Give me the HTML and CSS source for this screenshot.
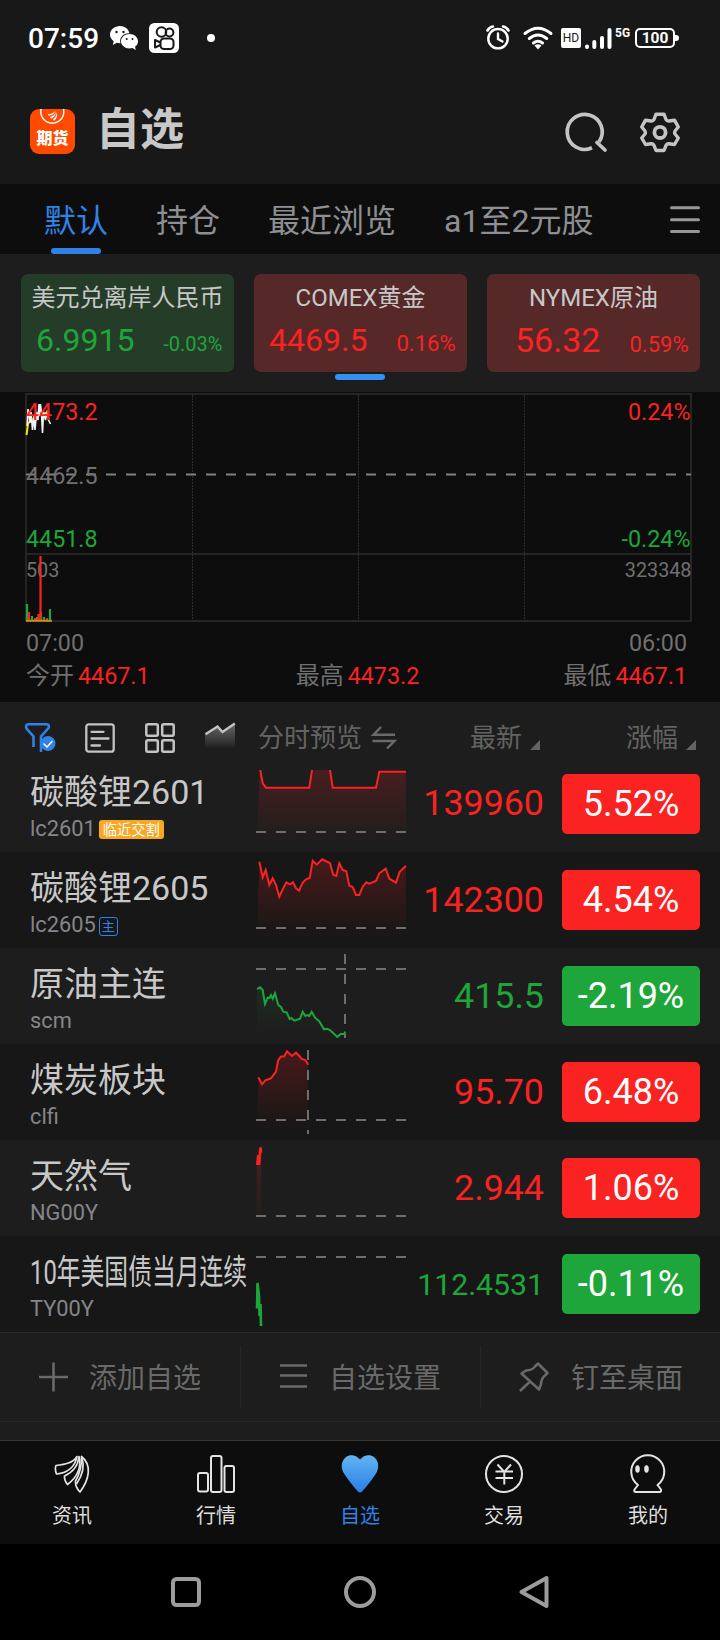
FILE: index.html
```html
<!DOCTYPE html>
<html lang="zh-CN">
  <head>
    <meta charset="UTF-8" />
    <meta name="viewport" content="width=device-width, initial-scale=1.0" />
    <title>自选</title>
    <link rel="stylesheet" href="styles.css">
  </head>
  <body>
    <!-- Status bar -->
    <div class="status-bar">
      <span class="time">07:59</span>
      <svg class="ic-wechat" width="28" height="24" viewBox="0 0 28 24">
        <path fill="#fff" d="M10 0C4.500 0 0 3.800 0 8.600c0 2.700 1.400 5 3.700 6.600L2.800 19l4-2.200c1.200.3 2.300.5 3.700.4C9 11.500 13 7 19.500 7.200 18.500 3 14.600 0 10 0z" />
        <path fill="#fff" d="M19.500 8c-4.700 0-8.500 3.200-8.500 7.200s3.800 7.200 8.500 7.200c1 0 2-.1 2.900-.4l3.400 2-.8-3.200c1.800-1.300 3-3.300 3-5.600 0-4-3.800-7.200-8.500-7.200z" />
        <g fill="#181818"><circle cx="6.500" cy="6" r="1.200" /><circle cx="13.500" cy="6" r="1.200" /><circle cx="16.700" cy="13" r="1" /><circle cx="22.500" cy="13" r="1" /></g>
      </svg>
      <svg class="ic-kuai" width="30" height="30" viewBox="0 0 30 30">
        <rect width="30" height="30" rx="5.500" fill="#fff" />
        <g fill="none" stroke="#181818" stroke-width="2">
          <circle cx="12.500" cy="9" r="4.800" />
          <circle cx="20.500" cy="9.500" r="3.900" />
          <rect x="11.500" y="15.500" width="13" height="10.500" rx="3.500" />
          <path d="M11.500 19.500L6 17v7.500l5.500-2.500" stroke-linejoin="round" />
        </g>
      </svg>
      <i class="dot"></i>
      <svg class="ic-alarm" width="24" height="25" viewBox="0 0 24 25">
        <g fill="none" stroke="#fff" stroke-width="2.400" stroke-linecap="round">
          <circle cx="12" cy="13.700" r="9.700" />
          <path d="M12 8.500v5.500l4.500 2.500" />
          <path d="M1.500 5.500Q3.500 2 7 1.500M22.500 5.500Q20.500 2 17 1.500" stroke-width="2.600" />
        </g>
      </svg>
      <svg class="ic-wifi" width="30" height="24" viewBox="0 0 30 24">
        <g fill="none" stroke="#fff" stroke-width="3" stroke-linecap="round">
          <path d="M2 7.500Q15-3 28 7.500" />
          <path d="M6.300 12.500Q15 5.500 23.700 12.500" />
          <path d="M10.500 17Q15 13.500 19.500 17" />
        </g>
        <path fill="#fff" d="M11.500 19.500Q15 17 18.500 19.500L15 23.500z" />
      </svg>
      <span class="hd">HD</span>
      <svg class="ic-signal" width="27" height="21" viewBox="0 0 27 21">
        <g stroke="#fff" stroke-width="4" stroke-linecap="round">
          <path d="M2 18.500v.5M9.300 14v5M17 10v9M24.500 2v17" />
        </g>
      </svg>
      <span class="net">5G</span>
      <span class="battery">100</span>
    </div>

    <!-- Title bar -->
    <header class="header">
      <div class="logo">
        <svg width="45" height="18" viewBox="0 0 45 18">
          <circle cx="22.300" cy="2.700" r="11.500" fill="none" stroke="#fff" stroke-width="1.500" />
          <path fill="#fff" d="M25.500 2c-2 2-4 3.200-7.500 3.200l.5 1.600C22 6.500 24 5 25.500 2zM26 2.500c-1 3-3 4.500-6 5.500l1 1.800c3-1.300 5-4 5-7.300zM26.500 3c.5 3-1 5.500-3.500 7.300l1 1.500c3-2.300 4-5.800 2.500-8.800z" />
        </svg>
        <span>期货</span>
      </div>
      <h1>自选</h1>
      <svg class="ic-search" width="42" height="42" viewBox="0 0 42 42">
        <g fill="none" stroke="#c4c4c4" stroke-width="3.700" stroke-linecap="round">
          <path d="M26 36.800A17.500 17.500 0 1 1 33 31" stroke-linecap="butt" />
          <path d="M31 31.500l8 7.500" />
        </g>
      </svg>
      <svg class="ic-gear" width="42" height="42" viewBox="0 0 42 42">
        <g fill="none" stroke="#c4c4c4" stroke-width="3.400" stroke-linejoin="round">
          <path d="M17 3.200H25L27 8.500Q28 10.300 30 10L35.500 9.200L39.300 16L36 20Q35.200 21.500 36 23L39.300 27L35.500 33.500L30 32.700Q28 32.500 27 34.300L25 39.500H17L15 34.300Q14 32.500 12 32.700L6.500 33.500L2.700 27L6 23Q6.800 21.500 6 20L2.700 16L6.500 9.200L12 10Q14 10.300 15 8.500Z" />
          <circle cx="21" cy="21.400" r="5.600" stroke-width="3.800" />
        </g>
      </svg>
    </header>

    <!-- Group tabs -->
    <nav class="tabs">
      <a class="tab active">默认</a>
      <a class="tab">持仓</a>
      <a class="tab">最近浏览</a>
      <a class="tab">a1至2元股</a>
      <svg class="ic-menu" width="30" height="28" viewBox="0 0 30 28">
        <path d="M1.500 1.800h27M1.500 13.800h27M1.500 25.500h27" stroke="#98989c" stroke-width="3" stroke-linecap="round" />
      </svg>
    </nav>

    <!-- Index cards -->
    <section class="cards">
      <div class="card down">
        <div class="card-name">美元兑离岸人民币</div>
        <div class="card-row"><b>6.9915</b><span class="small">-0.03%</span></div>
      </div>
      <div class="card up">
        <div class="card-name">COMEX黄金</div>
        <div class="card-row"><b>4469.5</b><span>0.16%</span></div>
      </div>
      <div class="card up">
        <div class="card-name">NYMEX原油</div>
        <div class="card-row short"><b>56.32</b><span>0.59%</span></div>
      </div>
      <i class="pager"></i>
    </section>

    <!-- Intraday chart -->
    <section class="chart">
      <svg width="720" height="264" viewBox="0 0 720 264">
        <g fill="none" stroke="#252525" stroke-width="2">
          <rect x="26" y="2" width="665" height="227" />
          <path d="M26 162h665" />
          <path d="M192.500 3v226M358.500 3v226M524.500 3v226" stroke="#2e2e2e" stroke-width="1" stroke-dasharray="2 1" />
        </g>
        <path d="M26 82.500h665" stroke="#808080" stroke-width="2" stroke-dasharray="10 10" />
        <path d="M26.500 43L28 32l3-5 5 1 3-5 4-1 6-2" fill="none" stroke="#f5e400" stroke-width="2" />
        <path d="M27 34l1-17 2 14 1-11 1.500 18 1.500-14 1 14 1.500-18 1.500 8 1-16v12l1.500-12 1 10 1 19 1-21 2 8 2-10 1 10 2 4" fill="none" stroke="#f2f2f2" stroke-width="1.600" stroke-linejoin="bevel" />
        <g class="chart-text">
          <text x="26" y="28" class="t-up">4473.2</text>
          <text x="26" y="92">4462.5</text>
          <text x="26" y="155" class="t-down">4451.8</text>
          <text x="26" y="259">07:00</text>
          <text x="690.500" y="28" class="t-up end">0.24%</text>
          <text x="690.500" y="155" class="t-down end">-0.24%</text>
          <text x="687" y="259" class="end">06:00</text>
          <text x="26" y="185" class="vol">503</text>
          <text x="691.500" y="185" class="vol end">323348</text>
        </g>
        <path d="M27 229v-17M32 229v-5M37 229v-4M41 229v-9M44 229v-4M50 229v-12" stroke="#1fa63a" stroke-width="2.200" />
        <path d="M29 229v-9M35 229v-3M38.500 229v-7M40.500 229v-65M47 229v-3" stroke="#fb2222" stroke-width="2.200" />
        <path d="M26 228.800h26" stroke="#c89020" stroke-width="2" />
      </svg>
      <div class="stats">
        <span>今开<em>4467.1</em></span>
        <span>最高<em>4473.2</em></span>
        <span>最低<em>4467.1</em></span>
      </div>
    </section>

    <!-- List toolbar -->
    <div class="toolbar">
      <svg class="ic-filter" width="32" height="32" viewBox="0 0 32 32">
        <path d="M8.500 25V14.500L1.500 6.500Q0 2.500 3.500 2.200H21.500Q25 2.500 23.500 6L16 14.500V30" fill="none" stroke="#3182e6" stroke-width="2.600" />
        <circle cx="23" cy="21.500" r="7.500" fill="#3182e6" />
        <path d="M18.500 21.500l3.500 3.500 5.500-6" fill="none" stroke="#fff" stroke-width="1.400" />
      </svg>
      <svg class="ic-list" width="30" height="30" viewBox="0 0 30 30">
        <g fill="none" stroke="#c4c4c4" stroke-width="2.300" stroke-linecap="round">
          <rect x="1.300" y="1.300" width="27.400" height="27.400" rx="2.500" />
          <path d="M6.500 8.800h12M6.500 15.500h17M6.500 22.500h8.500" />
        </g>
      </svg>
      <svg class="ic-grid" width="30" height="30" viewBox="0 0 30 30">
        <g fill="none" stroke="#c4c4c4" stroke-width="2.500">
          <rect x="1.300" y="1.300" width="11.500" height="11.500" rx="1.500" />
          <rect x="17.200" y="1.300" width="11.500" height="11.500" rx="1.500" />
          <rect x="1.300" y="17.200" width="11.500" height="11.500" rx="1.500" />
          <rect x="17.200" y="17.200" width="11.500" height="11.500" rx="1.500" />
        </g>
      </svg>
      <svg class="ic-trend" width="30" height="30" viewBox="0 0 30 30">
        <defs>
          <linearGradient id="trendFill" x1="0" y1="0" x2="0" y2="1">
            <stop offset="0" stop-color="#888" stop-opacity=".7" />
            <stop offset="1" stop-color="#888" stop-opacity="0" />
          </linearGradient>
        </defs>
        <path d="M0 11.500L12.500 3.500 17.500 9 30 1V26H0z" fill="url(#trendFill)" />
        <path d="M.5 11.200L12.500 3.500 17.500 9 29.800.5" fill="none" stroke="#c4c4c4" stroke-width="2.400" />
      </svg>
      <span class="col-preview">分时预览</span>
      <svg class="ic-swap" width="24" height="24" viewBox="0 0 24 24">
        <path d="M9 1L1.500 8.800H23M.5 15H22.500L15 22.500" fill="none" stroke="#6a6a6a" stroke-width="2.400" />
      </svg>
      <span class="col-last">最新<i class="sort"></i></span>
      <span class="col-change">涨幅<i class="sort"></i></span>
    </div>

    <!-- Quotes -->
    <svg class="defs" width="0" height="0">
      <defs>
        <linearGradient id="upFill" gradientUnits="userSpaceOnUse" x1="0" y1="0" x2="0" y2="80">
          <stop offset="0" stop-color="#fb2222" stop-opacity=".22" />
          <stop offset="1" stop-color="#fb2222" stop-opacity="0" />
        </linearGradient>
        <linearGradient id="downFill" gradientUnits="userSpaceOnUse" x1="0" y1="20" x2="0" y2="80">
          <stop offset="0" stop-color="#1fa63a" stop-opacity=".16" />
          <stop offset="1" stop-color="#1fa63a" stop-opacity="0" />
        </linearGradient>
      </defs>
    </svg>
    <main class="quotes">
      <div class="quote first">
        <div class="name"><h3>碳酸锂2601</h3><p>lc2601<span class="tag-warn">临近交割</span></p></div>
        <svg class="spark" width="150" height="84" viewBox="0 0 150 84">
          <path class="fill-up" d="M3.700 4L4.300 8 6.700 21.300 10 25.700H53.300L56 8V4H74V8L76.700 25.700H120L123.300 9.700H150V80H1z" />
          <path class="line-up" d="M3.700 4L4.300 8 6.700 21.300 10 25.700H53.300L56 8 56.500 4H73.500L74 8 76.700 25.700H120L123.300 9.700H150" />
          <path class="dash" d="M0 70h150" />
        </svg>
        <span class="price red">139960</span>
        <span class="pill bg-red">5.52%</span>
      </div>
      <div class="quote dark">
        <div class="name"><h3>碳酸锂2605</h3><p>lc2605<span class="tag-main">主</span></p></div>
        <svg class="spark" width="150" height="84" viewBox="0 0 150 84">
          <path class="fill-up" d="M3.300 3.700L6.700 19.300 9.700 12 13.300 27 16.700 20.300 20 27 23.300 38.700 27.300 30.300 30.300 24.300 34 26.300 37 24.300 40 30.300 43 32.700 46.700 24.700 50 21.300 53.700 20 56.700 2.700 60.700 6.700 66.300 1.300 74 5.300 77.300 17 80.300 18 83.300 5.300 86.700 12 90.300 13.300 93.300 27.700 96.700 29 100 37 103.300 37 106.700 28.700 110.300 24.300 113.300 25.700 120 23 123.300 15.300 129.700 10.700 133.300 20.700 140 24.700 143.700 13.700 150 7.700V80H1z" />
          <path class="line-up" d="M3.300 3.700L6.700 19.300 9.700 12 13.300 27 16.700 20.300 20 27 23.300 38.700 27.300 30.300 30.300 24.300 34 26.300 37 24.300 40 30.300 43 32.700 46.700 24.700 50 21.300 53.700 20 56.700 2.700 60.700 6.700 66.300 1.300 74 5.300 77.300 17 80.300 18 83.300 5.300 86.700 12 90.300 13.300 93.300 27.700 96.700 29 100 37 103.300 37 106.700 28.700 110.300 24.300 113.300 25.700 120 23 123.300 15.300 129.700 10.700 133.300 20.700 140 24.700 143.700 13.700 150 7.700" />
          <path class="dash" d="M0 70h150" />
        </svg>
        <span class="price red">142300</span>
        <span class="pill bg-red">4.54%</span>
      </div>
      <div class="quote">
        <div class="name"><h3>原油主连</h3><p>scm</p></div>
        <svg class="spark" width="150" height="84" viewBox="0 0 150 84">
          <path class="fill-down" d="M1 35L4 33.300 6.700 36 9 50 11.700 43.700 15 41 16.700 44.700 19 39.300 22.300 51 25 53 27.300 57.700 30.700 58.300 33.700 65 38.300 66.700 44 64.700 46.700 57.700 49.300 62 53.300 62 55.700 57.700 59 63.700 63.300 67.300 68 75.300 74 76 81.300 83H1z" />
          <path class="dash" d="M0 15h150M89 0v84" />
          <path class="line-down" d="M1 35L4 33.300 6.700 36 9 50 11.700 43.700 13.500 44 15 41 16.700 44.700 19 39.300 22.300 51 25 53 27.300 57.700 30.700 58.300 33.700 65 35.500 64 38.300 66.700 44 64.700 46.700 57.700 49.300 62 51 61 53.300 62 55.700 57.700 59 63.700 63.300 67.300 68 75.300 71 74.700 74 76 81.300 83 84.700 80 88.300 80 89.300 77.700" />
        </svg>
        <span class="price green">415.5</span>
        <span class="pill bg-green">-2.19%</span>
      </div>
      <div class="quote dark">
        <div class="name"><h3>煤炭板块</h3><p>clfi</p></div>
        <svg class="spark" width="150" height="84" viewBox="0 0 150 84">
          <path class="fill-up" d="M2.300 27.300L6 34.300 9.300 30.300 15 28.300 20 21.700 22 10.700 24.700 6.700 28.300 6.300 31 1.300 36 6 40 2.700 44 6.700 45.700 9 49.300 10 52 14.700V80H1z" />
          <path class="dash" d="M0 70h150M52 0v84" />
          <path class="line-up" d="M2.300 27.300L6 34.300 9.300 30.300 15 28.300 20 21.700 22 10.700 24.700 6.700 28.300 6.300 31 1.300 36 6 40 2.700 44 6.700 45.700 9 49.300 10 52.300 14.700" />
        </svg>
        <span class="price red">95.70</span>
        <span class="pill bg-red">6.48%</span>
      </div>
      <div class="quote">
        <div class="name"><h3>天然气</h3><p>NG00Y</p></div>
        <svg class="spark" width="150" height="84" viewBox="0 0 150 84">
          <path class="fill-up" d="M.7 19L4.300 1.300 5.300 6V80H.5z" />
          <path class="line-up thick" d="M1.300 19L2.200 9 3 19 4.500 1.300 5 6.500" />
          <path class="dash" d="M0 70h150" />
        </svg>
        <span class="price red">2.944</span>
        <span class="pill bg-red">1.06%</span>
      </div>
      <div class="quote dark">
        <div class="name"><h3 class="narrow">10年美国债当月连续</h3><p>TY00Y</p></div>
        <svg class="spark" width="150" height="84" viewBox="0 0 150 84">
          <path class="dash" d="M0 15h150" />
          <path class="line-down thick" d="M1 66.500L1.500 41 3 54 3.500 74 4.500 62 5 84" />
        </svg>
        <span class="price green long">112.4531</span>
        <span class="pill bg-green">-0.11%</span>
      </div>
    </main>

    <div class="actions">
      <a>
        <svg width="30" height="30" viewBox="0 0 30 30"><path d="M15.500.5v29M1 15h29" stroke="#6a6a6a" stroke-width="2.600" /></svg>
        <span>添加自选</span>
      </a>
      <a>
        <svg width="30" height="30" viewBox="0 0 30 30"><path d="M2 3.500h27M2 13.500h27M2 24.500h27" stroke="#6a6a6a" stroke-width="2.600" /></svg>
        <span>自选设置</span>
      </a>
      <a>
        <svg width="30" height="30" viewBox="-1 0 30 30"><path d="M19 1.500L28.500 11 26 13.500Q22.500 16 22 22L20 27.500 2.500 11.500 7 8.500Q14 8 16 4.500zM11.500 19L1 29" fill="none" stroke="#6a6a6a" stroke-width="2.500" stroke-linejoin="round" /></svg>
        <span>钉至桌面</span>
      </a>
    </div>

    <!-- Bottom navigation -->
    <nav class="bottom-nav">
      <a>
        <svg width="38" height="38" viewBox="0 0 38 38">
          <g fill="none" stroke="#e4e4e4" stroke-width="1.700" stroke-linejoin="round">
            <path d="M24 1.500C20 8 12 9.500 3 10.500Q1.500 14 3.500 19C14 18 22 12 24 1.500z" />
            <path d="M26 1.500C25 12 18 18 11.500 21Q11 25 14.500 29.500C23 23 29 14 26 1.500z" />
            <path d="M28.500 1.500C29 13 26 20 22.500 26Q22 32 27 37C36 25 39.500 10 28.500 1.500z" />
            <path d="M29 3Q33 15 23.500 29" />
          </g>
        </svg>
        <span>资讯</span>
      </a>
      <a>
        <svg width="38" height="38" viewBox="0 0 38 38">
          <g fill="none" stroke="#e4e4e4" stroke-width="2">
            <rect x="1" y="18" width="10" height="18.500" rx="2" />
            <rect x="14" y="1" width="10.500" height="36" rx="2" />
            <rect x="27.500" y="11" width="9.500" height="26" rx="2" />
          </g>
        </svg>
        <span>行情</span>
      </a>
      <a class="active">
        <svg width="38" height="38" viewBox="0 0 38 38">
          <defs>
            <linearGradient id="heart" x1="0" y1="0" x2="0" y2="1">
              <stop offset="0" stop-color="#62b5f3" />
              <stop offset="1" stop-color="#2b7de6" />
            </linearGradient>
          </defs>
          <path fill="url(#heart)" d="M19 4.500C23-.5 29-1 33 2c5 4 5.500 11 2 16.500C31.500 24 26 31 21.500 36q-2.500 3-5 0C12 31 6.500 24 3 18.500-.5 13 0 6 5 2 9-1 15-.5 19 4.500z" />
        </svg>
        <span>自选</span>
      </a>
      <a>
        <svg width="38" height="38" viewBox="0 0 38 38">
          <g fill="none" stroke="#e4e4e4" stroke-width="2">
            <circle cx="19" cy="19" r="18" />
            <path d="M12.500 9.500L19.300 17 26 9.500M10.500 16.500h17.500M10.500 23h17.500M19.300 17v12.500" />
          </g>
        </svg>
        <span>交易</span>
      </a>
      <a>
        <svg width="38" height="38" viewBox="0 0 38 38">
          <path d="M9 30A16.500 16.500 0 1 1 28.500 30L32 34.500Q32.500 37 30.500 37H7Q4.500 37 5.500 34.500z" fill="none" stroke="#e4e4e4" stroke-width="2" stroke-linejoin="round" />
          <ellipse cx="8.500" cy="14" rx="2.300" ry="3.700" fill="#e4e4e4" />
          <ellipse cx="17.500" cy="14" rx="2.300" ry="3.700" fill="#e4e4e4" />
        </svg>
        <span>我的</span>
      </a>
    </nav>

    <div class="system-nav">
      <svg width="32" height="34" viewBox="0 0 32 34"><rect x="3" y="4" width="26" height="26" rx="3.500" /></svg>
      <svg width="32" height="34" viewBox="0 0 32 34"><circle cx="16" cy="17" r="14" /></svg>
      <svg width="32" height="34" viewBox="0 0 32 34"><path d="M28.500 3V31L3.500 17z" stroke-linejoin="round" /></svg>
    </div>
  </body>
</html>
```
FILE: styles.css
```css
* {
  box-sizing: border-box;
}
body {
  margin: 0;
  width: 720px;
  background-color: #1d1d1d;
  color: #c8c8c8;
  font-family: Roboto, "Noto Sans CJK SC", sans-serif;
}
h1,
h3,
p {
  margin: 0;
  font-weight: 400;
}
svg {
  display: block;
  flex: none;
  overflow: visible;
}
em,
i {
  font-style: normal;
}

/* Status bar */
.status-bar {
  display: flex;
  align-items: center;
  height: 74px;
  padding: 1px 45px 0 28px;
  background-color: #181818;
  color: #fff;
}
.time {
  width: 72px;
  font-size: 28px;
  font-weight: 500;
  line-height: 34px;
  padding-top: 2px;
}
.ic-wechat {
  margin-left: 10px;
}
.ic-kuai {
  margin-left: 11px;
}
.dot {
  width: 8px;
  height: 8px;
  margin-left: 28px;
  border-radius: 50%;
  background-color: #fff;
}
.ic-alarm {
  margin-left: auto;
}
.ic-wifi {
  margin-left: 13px;
}
.hd {
  width: 20px;
  height: 20px;
  margin-left: 8px;
  border-radius: 2px;
  background-color: #fff;
  color: #181818;
  font-size: 12px;
  line-height: 20px;
  text-align: center;
}
.ic-signal {
  margin: 2px 0 0 4px;
}
.net {
  width: 15px;
  margin-left: 3px;
  margin-bottom: 10px;
  font-size: 12px;
  font-weight: 700;
  line-height: 12px;
}
.battery {
  position: relative;
  width: 40px;
  height: 20px;
  margin-left: 5px;
  border: 2px solid #fff;
  border-radius: 5px;
  font-size: 15.5px;
  font-weight: 700;
  line-height: 17px;
  text-align: center;
}
.battery::after {
  content: "";
  position: absolute;
  right: -6px;
  top: 5px;
  width: 4px;
  height: 6px;
  border-radius: 0 3px 3px 0;
  background-color: #fff;
}

/* Title bar */
.header {
  display: flex;
  align-items: center;
  height: 110px;
  padding: 0 39px 0 30px;
  background-color: #181818;
}
.logo {
  width: 45px;
  height: 45px;
  margin-top: 5px;
  border-radius: 9px;
  background-color: #ff4a00;
  color: #fff;
  overflow: hidden;
}
.logo span {
  display: block;
  font-size: 16px;
  font-weight: 900;
  line-height: 24px;
  text-align: center;
}
.header h1 {
  margin: 2px 0 0 21px;
  font-size: 44px;
  font-weight: 700;
  line-height: 52px;
}
.ic-search {
  margin: 5px 31px 0 auto;
}
.ic-gear {
  margin-top: 5px;
}

/* Tabs */
.tabs {
  display: flex;
  height: 70px;
  padding: 0 20px 0 44px;
  gap: 48px;
  background-color: #0d0d0d;
  color: #8f8f93;
}
.tab {
  position: relative;
  font-size: 32px;
  line-height: 74px;
}
.tab.active {
  color: #3182e6;
}
.tab.active::after {
  content: "";
  position: absolute;
  left: 7px;
  top: 64px;
  width: 50px;
  height: 6px;
  border-radius: 3px;
  background-color: #3182e6;
}
.ic-menu {
  margin: 22px 0 0 auto;
}

/* Cards */
.cards {
  position: relative;
  display: flex;
  gap: 20px;
  height: 138px;
  padding: 20px 20px 0 21px;
}
.card {
  width: 213px;
  height: 98px;
  border-radius: 7px;
}
.card.up {
  background-color: #572828;
  color: #fb2222;
}
.card.down {
  background-color: #253c29;
  color: #1fa63a;
}
.card-name {
  padding-top: 8px;
  color: #c8c8c8;
  font-size: 24px;
  line-height: 32px;
  text-align: center;
}
.card-row {
  display: flex;
  align-items: baseline;
  justify-content: space-between;
  padding: 5px 11.5px 0 15px;
  line-height: 42px;
}
.card-row b {
  font-size: 32px;
  font-weight: 400;
}
.card-row span {
  font-size: 22px;
}
.card-row .small {
  font-size: 20px;
}
.card-row.short {
  padding-left: 28px;
}
.card-row.short b {
  font-size: 34px;
}
.pager {
  position: absolute;
  left: 335px;
  top: 120px;
  width: 50px;
  height: 6px;
  border-radius: 3px;
  background-color: #368fee;
}

/* Chart */
.chart {
  height: 310px;
  background-color: #0d0d0d;
}
.chart-text {
  fill: #707070;
  font-size: 23.3px;
}
.chart-text .t-up {
  fill: #fb2222;
}
.chart-text .t-down {
  fill: #1fa63a;
}
.chart-text .vol {
  font-size: 19.8px;
}
.chart-text .end {
  text-anchor: end;
}
.stats {
  display: flex;
  justify-content: space-between;
  padding: 0 33px 0 26px;
  color: #707070;
  font-size: 24px;
  line-height: 40px;
}
.stats em {
  margin-left: 4px;
  color: #fb2222;
  font-size: 23.3px;
}
.stats span:nth-child(2) {
  margin-left: 2px;
}

/* Toolbar */
.toolbar {
  display: flex;
  align-items: center;
  height: 68px;
  padding: 3px 0 0 25px;
  color: #636363;
  font-size: 26px;
  line-height: 40px;
}
.ic-list {
  margin-left: 28px;
}
.ic-grid {
  margin-left: 30px;
}
.ic-trend {
  margin-left: 30px;
}
.col-preview {
  margin-left: 23px;
}
.ic-swap {
  margin-left: 10px;
}
.col-last {
  margin-left: 74px;
}
.col-change {
  margin-left: 86px;
}
.sort {
  display: inline-block;
  margin-left: 8px;
  border-left: 10px solid transparent;
  border-bottom: 10px solid #636363;
  transform: translateY(3px);
}

/* Quotes */
.defs {
  position: absolute;
}
.quote {
  display: flex;
  height: 96px;
  padding: 0 20px 0 30px;
}
.quote.dark {
  background-color: #171717;
}
.quote.first {
  height: 82px;
  align-items: flex-end;
  overflow: hidden;
}
.name {
  width: 226px;
  height: 96px;
  padding-top: 16px;
  white-space: nowrap;
}
.name h3 {
  font-size: 34px;
  line-height: 40px;
}
.name .narrow {
  transform: scaleX(0.7);
  transform-origin: left;
}
.name p {
  display: flex;
  align-items: center;
  color: #85858a;
  font-size: 21.8px;
  line-height: 33px;
}
.tag-warn {
  height: 19px;
  margin: 2px 0 0 3px;
  padding: 0 4px;
  border-radius: 3px;
  background-color: #f9a723;
  color: #fff;
  font-size: 14.3px;
  line-height: 20px;
}
.tag-main {
  width: 19px;
  height: 19px;
  margin: 3px 0 0 3px;
  border: 1px solid #3182e6;
  border-radius: 3px;
  color: #3182e6;
  font-size: 13px;
  line-height: 18px;
  text-align: center;
}
.spark {
  height: 96px;
  padding: 6px 0;
}
.fill-up {
  fill: url(#upFill);
}
.fill-down {
  fill: url(#downFill);
}
.line-up {
  fill: none;
  stroke: #fb2222;
  stroke-width: 2;
}
.line-down {
  fill: none;
  stroke: #1fa63a;
  stroke-width: 2;
}
.thick {
  stroke-width: 2.6;
  stroke-linejoin: bevel;
}
.dash {
  fill: none;
  stroke: #6e6e6e;
  stroke-width: 2;
  stroke-dasharray: 10 10;
}
.price {
  width: 138px;
  font-size: 35.8px;
  line-height: 97px;
  text-align: right;
}
.price.long {
  font-size: 30.2px;
}
.pill {
  width: 138px;
  height: 60px;
  margin: 18px 0 0 18px;
  border-radius: 5px;
  color: #fff;
  font-size: 36px;
  line-height: 61px;
  text-align: center;
}
.quote.first .pill {
  margin-bottom: 18px;
}
.red {
  color: #fb2222;
}
.green {
  color: #1fa63a;
}
.bg-red {
  background-color: #fb2222;
}
.bg-green {
  background-color: #1fa63a;
}

/* Actions */
.actions {
  display: flex;
  height: 90px;
  padding: 13px 0;
  border-top: 1px solid #272727;
  border-bottom: 1px solid #272727;
  color: #6a6a6a;
  font-size: 28px;
  line-height: 40px;
}
.actions a {
  display: flex;
  align-items: center;
  width: 240px;
  padding-left: 38px;
  gap: 21px;
}
.actions a + a {
  padding-left: 37px;
  border-left: 1px solid #272727;
}
.actions a:last-child {
  gap: 23px;
}
.actions span {
  padding-top: 3px;
}

/* Bottom navigation */
.bottom-nav {
  display: flex;
  height: 104px;
  margin-top: 18px;
  border-top: 1px solid #363636;
  background-color: #0d0d0d;
}
.bottom-nav a {
  display: flex;
  flex-direction: column;
  align-items: center;
  width: 144px;
  padding-top: 14px;
  color: #dedede;
  font-size: 20px;
  line-height: 24px;
}
.bottom-nav span {
  margin-top: 11px;
}
.bottom-nav .active {
  color: #3182e6;
}
.system-nav {
  display: flex;
  justify-content: center;
  align-items: center;
  gap: 142px;
  height: 96px;
  background-color: #000;
}
.system-nav svg {
  fill: none;
  stroke: #9c9c9c;
  stroke-width: 4;
}
```
